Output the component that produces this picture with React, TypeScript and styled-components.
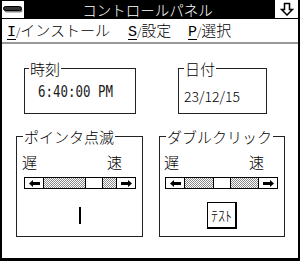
import React from "react";
import styled, { createGlobalStyle } from "styled-components";

const Global = createGlobalStyle`
  html, body { margin: 0; padding: 0; background: #fff; }
  body { font-family: "Noto Sans CJK JP", "Noto Sans", sans-serif; font-weight: 300; color: #000; }
`;

const Window = styled.div`
  width: 300px;
  height: 261px;
  box-sizing: border-box;
  border-left: 2px solid #000;
  border-right: 2px solid #000;
  border-bottom: 3px solid #000;
  background: #fff;
  display: flex;
  flex-direction: column;
  overflow: hidden;
`;

const TitleBar = styled.div`
  height: 19px;
  background: #000;
  display: flex;
  align-items: flex-start;
  flex-shrink: 0;
`;

const SysBox = styled.div`
  width: 22px;
  height: 17px;
  margin-top: 1px;
  background: #fff;
  display: flex;
  align-items: center;
  justify-content: center;
`;

const ArrowBox = styled.div`
  width: 23px;
  height: 18px;
  background: #fff;
  display: flex;
  align-items: center;
  justify-content: center;
`;

const TitleText = styled.div`
  flex: 1;
  text-align: center;
  color: #fff;
  font-size: 14.5px;
  line-height: 19px;
  padding-right: 4px;
  white-space: nowrap;
`;

const MenuBar = styled.div`
  height: 23px;
  border-bottom: 2px solid #999;
  display: flex;
  align-items: center;
  padding-left: 5px;
  font-size: 15px;
  line-height: 23px;
  flex-shrink: 0;
`;

const MenuItem = styled.div<{ $w?: number }>`
  width: ${(p) => (p.$w ? `${p.$w}px` : "auto")};
  white-space: nowrap;
`;

const Mnemonic = styled.span`
  font-family: "Liberation Mono", monospace;
  text-decoration: underline;
  text-underline-offset: 3px;
  text-decoration-thickness: 1px;
`;

const Slash = styled.span`
  font-size: 11px;
`;

const Content = styled.div`
  display: flex;
  flex-direction: column;
`;

const Row = styled.div<{ $mt: number }>`
  display: flex;
  margin-top: ${(p) => p.$mt}px;
`;

const Group = styled.fieldset<{ $w: number; $h: number; $ml: number }>`
  margin: 0 0 0 ${(p) => p.$ml}px;
  padding: 0;
  min-width: 0;
  width: ${(p) => p.$w}px;
  height: ${(p) => p.$h}px;
  box-sizing: border-box;
  border: 1px solid #222;
  display: flex;
  flex-direction: column;
`;

const Legend = styled.legend<{ $lm: number }>`
  font-size: 15px;
  line-height: 15px;
  padding: 0 1px;
  margin-left: ${(p) => p.$lm}px;
`;

const TimeValue = styled.div`
  font-family: "DejaVu Sans Mono", monospace;
  font-size: 15px;
  line-height: 15px;
  color: #1a1a1a;
  margin-top: 9px;
  padding-left: 13px;
  transform: scaleX(0.83);
  transform-origin: 13px 0;
  white-space: nowrap;
`;

const DateValue = styled.div`
  font-size: 14px;
  line-height: 15px;
  margin-top: 13px;
  padding-left: 5px;
  white-space: nowrap;
`;

const SpeedLabels = styled.div<{ $pl: number }>`
  display: flex;
  justify-content: space-between;
  font-size: 15px;
  line-height: 15px;
  margin-top: 10px;
  padding: 0 20px 0 ${(p) => p.$pl}px;
`;

const ScrollBar = styled.div<{ $w: number; $ml: number }>`
  display: flex;
  width: ${(p) => p.$w}px;
  height: 12px;
  box-sizing: border-box;
  margin: 8px 0 0 ${(p) => p.$ml}px;
  border: 1px solid #000;
`;

const ArrowCell = styled.div<{ $side: "left" | "right" }>`
  width: 18px;
  flex-shrink: 0;
  background: #fff;
  display: flex;
  align-items: center;
  justify-content: center;
  ${(p) => (p.$side === "left" ? "border-right: 1px solid #000;" : "border-left: 1px solid #000;")}
`;

const Track = styled.div<{ $w?: number }>`
  ${(p) => (p.$w !== undefined ? `width: ${p.$w}px; flex-shrink: 0;` : "flex: 1;")}
  background: repeating-conic-gradient(#8a8a8a 0% 25%, #fff 0% 50%) 0 0 / 2px 2px;
`;

const Thumb = styled.div`
  width: 16px;
  flex-shrink: 0;
  background: #fff;
  border-left: 1px solid #000;
  border-right: 1px solid #000;
`;

const Bottom = styled.div`
  height: 27px;
  margin-top: 13px;
  display: flex;
  justify-content: center;
  align-items: center;
`;

const Caret = styled.div`
  width: 2px;
  height: 17px;
  background: #000;
`;

const TestButton = styled.button`
  width: 30px;
  height: 27px;
  box-sizing: border-box;
  padding: 0;
  margin: 0;
  background: #fff;
  border: 1px solid #000;
  border-right-width: 2px;
  border-bottom-width: 2px;
  font-family: "Noto Sans CJK JP", sans-serif;
  font-weight: 300;
  font-size: 14px;
  line-height: 14px;
  color: #000;
  display: flex;
  align-items: center;
  justify-content: center;
`;

const Arrow = ({ dir }: { dir: "left" | "right" }) => (
  <svg width="11" height="7" viewBox="0 0 11 7" style={{ transform: dir === "right" ? "scaleX(-1)" : undefined }}>
    <path d="M0 3.5 L4 0 V2 H11 V5 H4 V7 Z" fill="#000" />
  </svg>
);

const Scroll = ({ w, ml, before }: { w: number; ml: number; before: number }) => (
  <ScrollBar $w={w} $ml={ml}>
    <ArrowCell $side="left">
      <Arrow dir="left" />
    </ArrowCell>
    <Track $w={before} />
    <Thumb />
    <Track />
    <ArrowCell $side="right">
      <Arrow dir="right" />
    </ArrowCell>
  </ScrollBar>
);

export default function App() {
  return (
    <>
      <Global />
      <Window>
        <TitleBar>
          <SysBox>
            <svg width="20" height="7" viewBox="0 0 20 7">
              <rect x="1.5" y="2.5" width="18" height="4" rx="2" fill="#888" />
              <rect x="0.5" y="0.5" width="18" height="4" rx="2" fill="#333" stroke="#000" />
            </svg>
          </SysBox>
          <TitleText>コントロールパネル</TitleText>
          <ArrowBox>
            <svg width="14" height="14" viewBox="0 0 14 14">
              <path d="M4.5 1.5 H9.5 V7.5 H12.5 L7 13 L1.5 7.5 H4.5 Z" fill="#fff" stroke="#000" strokeWidth="1.5" strokeLinejoin="miter" />
            </svg>
          </ArrowBox>
        </TitleBar>
        <MenuBar>
          <MenuItem $w={121}>
            <Mnemonic>I</Mnemonic>
            <Slash>/</Slash>インストール
          </MenuItem>
          <MenuItem $w={60}>
            <Mnemonic>S</Mnemonic>
            <Slash>/</Slash>設定
          </MenuItem>
          <MenuItem>
            <Mnemonic>P</Mnemonic>
            <Slash>/</Slash>選択
          </MenuItem>
        </MenuBar>
        <Content>
          <Row $mt={17}>
            <Group $w={112} $h={53} $ml={22}>
              <Legend $lm={4}>時刻</Legend>
              <TimeValue>6:40:00 PM</TimeValue>
            </Group>
            <Group $w={89} $h={53} $ml={42}>
              <Legend $lm={5}>日付</Legend>
              <DateValue>23/12/15</DateValue>
            </Group>
          </Row>
          <Row $mt={15}>
            <Group $w={127} $h={108} $ml={14}>
              <Legend $lm={6}>ポインタ点滅</Legend>
              <SpeedLabels $pl={5}>
                <span>遅</span>
                <span>速</span>
              </SpeedLabels>
              <Scroll w={112} ml={7} before={41} />
              <Bottom>
                <Caret />
              </Bottom>
            </Group>
            <Group $w={126} $h={108} $ml={16}>
              <Legend $lm={6}>ダブルクリック</Legend>
              <SpeedLabels $pl={4}>
                <span>遅</span>
                <span>速</span>
              </SpeedLabels>
              <Scroll w={113} ml={5} before={28} />
              <Bottom>
                <TestButton>ﾃｽﾄ</TestButton>
              </Bottom>
            </Group>
          </Row>
        </Content>
      </Window>
    </>
  );
}
